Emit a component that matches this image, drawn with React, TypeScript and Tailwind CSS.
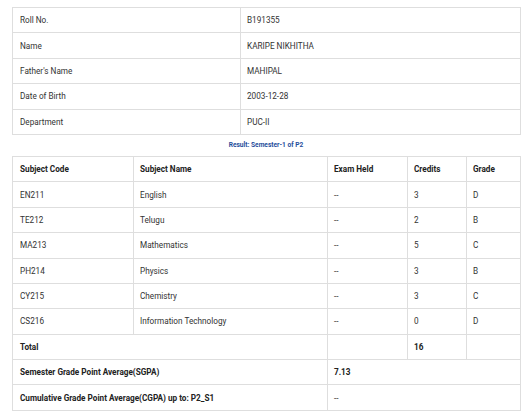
import React from "react";

const info: [string, string][] = [
  ["Roll No.", "B191355"],
  ["Name", "KARIPE NIKHITHA"],
  ["Father's Name", "MAHIPAL"],
  ["Date of Birth", "2003-12-28"],
  ["Department", "PUC-II"],
];

const subjects: [string, string, string, string, string][] = [
  ["EN211", "English", "--", "3", "D"],
  ["TE212", "Telugu", "--", "2", "B"],
  ["MA213", "Mathematics", "--", "5", "C"],
  ["PH214", "Physics", "--", "3", "B"],
  ["CY215", "Chemistry", "--", "3", "C"],
  ["CS216", "Information Technology", "--", "0", "D"],
];

const td = "border border-[#dedede] px-[6px] py-0 align-middle";

export default function App() {
  return (
    <div
      className="w-[530px] h-[418px] bg-white text-[8.2px] leading-[10px] text-[#333]"
      style={{ fontFamily: "Roboto, 'Liberation Sans', sans-serif" }}
    >
      <div className="pl-[12px] pr-[10px] pt-[7px]">
        <table className="w-[508px] table-fixed border-collapse">
          <colgroup>
            <col className="w-[228px]" />
            <col className="w-[280px]" />
          </colgroup>
          <tbody>
            {info.map(([k, v]) => (
              <tr key={k} className="h-[25.4px]">
                <td className={td + " pl-[7px]"}>{k}</td>
                <td className={td}>{v}</td>
              </tr>
            ))}
          </tbody>
        </table>
        <div className="h-[21px] flex items-center justify-center text-[6.6px] font-bold text-[#1f4e9c]">
          Result: Semester-1 of P2
        </div>
        <table className="w-[508px] table-fixed border-collapse">
          <colgroup>
            <col className="w-[121px]" />
            <col className="w-[194px]" />
            <col className="w-[80px]" />
            <col className="w-[59px]" />
            <col className="w-[54px]" />
          </colgroup>
          <tbody>
            <tr className="h-[25.4px] font-bold text-[#222]">
              <td className={td + " pl-[7px]"}>Subject Code</td>
              <td className={td}>Subject Name</td>
              <td className={td}>Exam Held</td>
              <td className={td}>Credits</td>
              <td className={td}>Grade</td>
            </tr>
            {subjects.map((r) => (
              <tr key={r[0]} className="h-[25.4px]">
                <td className={td + " pl-[7px]"}>{r[0]}</td>
                <td className={td}>{r[1]}</td>
                <td className={td}>{r[2]}</td>
                <td className={td}>{r[3]}</td>
                <td className={td}>{r[4]}</td>
              </tr>
            ))}
            <tr className="h-[25.4px] font-bold text-[#222]">
              <td className={td + " pl-[7px]"} colSpan={2}>Total</td>
              <td className={td}></td>
              <td className={td}>16</td>
              <td className={td}></td>
            </tr>
            <tr className="h-[25.4px]">
              <td className={td + " pl-[7px] font-bold text-[#222]"} colSpan={2}>
                Semester Grade Point Average(SGPA)
              </td>
              <td className={td + " font-bold text-[#222]"} colSpan={3}>7.13</td>
            </tr>
            <tr className="h-[25.4px]">
              <td className={td + " pl-[7px] font-bold text-[#222]"} colSpan={2}>
                Cumulative Grade Point Average(CGPA) up to: P2_S1
              </td>
              <td className={td} colSpan={3}>--</td>
            </tr>
          </tbody>
        </table>
      </div>
    </div>
  );
}
